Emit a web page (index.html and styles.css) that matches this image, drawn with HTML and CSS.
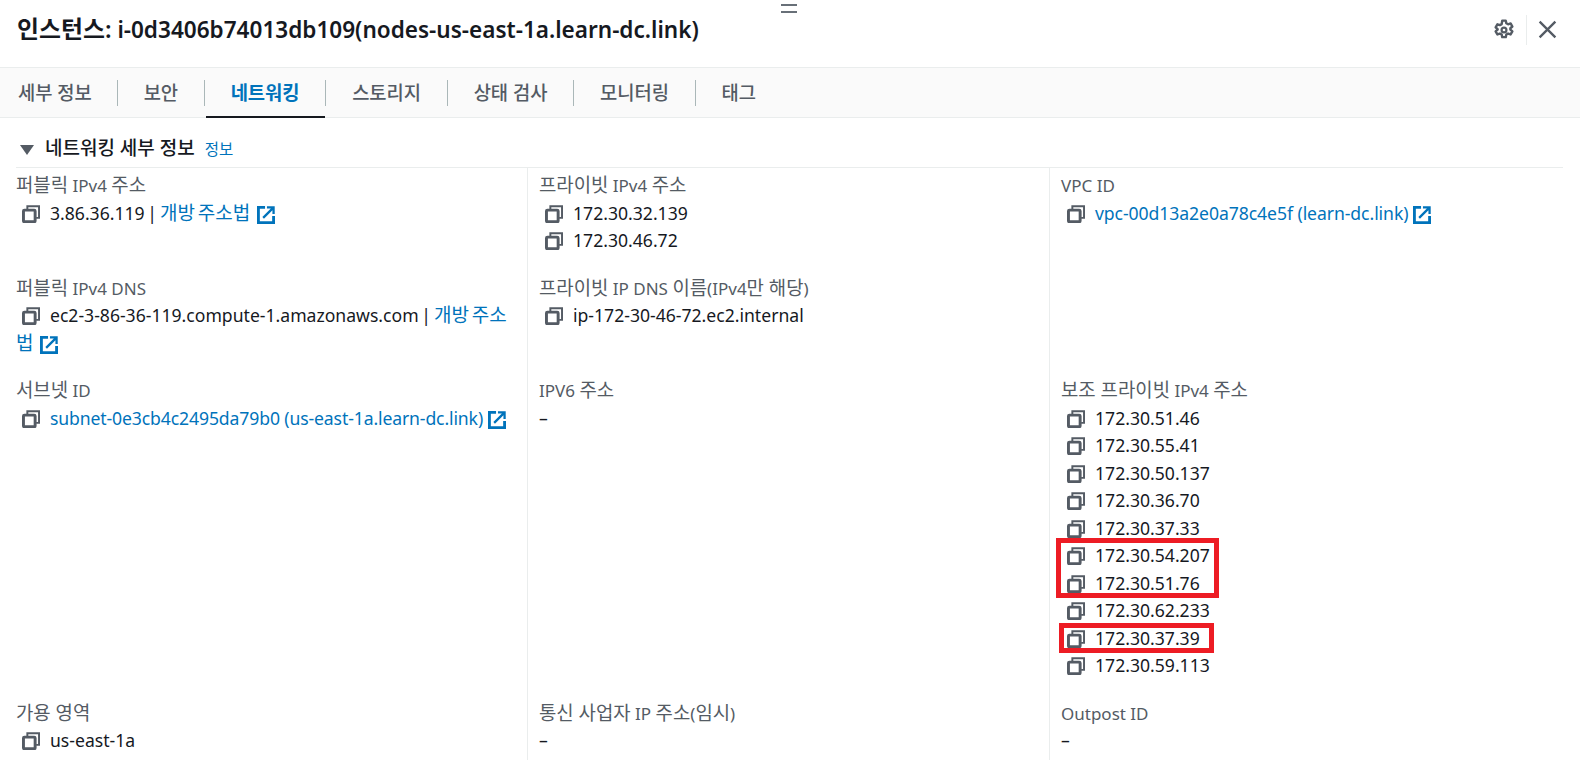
FILE: index.html
```html
<!DOCTYPE html>
<html lang="ko">

<head>
    <meta charset="UTF-8">
    <title>인스턴스 네트워킹</title>
    <link rel="stylesheet" href="styles.css">
</head>

<body>
    <svg class="defs" width="0" height="0">
        <symbol id="copy" viewBox="0.5 0.75 18.5 18.5">
            <path d="M6 5V2h12v12h-3" fill="none" stroke="currentColor" stroke-width="2" />
            <rect x="2" y="6" width="12" height="12" rx="1" fill="none" stroke="currentColor" stroke-width="3" />
        </symbol>
        <symbol id="ext" viewBox="0.5 0.5 19 19">
            <path d="M9 2H2v16h16v-7" fill="none" stroke="currentColor" stroke-width="3" />
            <path d="M7 13L17 3M11 2h7v7" fill="none" stroke="currentColor" stroke-width="2.4" />
        </symbol>
    </svg>

    <div class="panel">
        <div class="handle"></div>
        <header class="head">
            <h1><span class="ko">인스턴스:</span> i-0d3406b74013db109(nodes-us-east-1a.learn-dc.link)</h1>
            <div class="tools">
                <svg class="gear" viewBox="0 0 20 20" width="22" height="22">
                    <path d="M8.4 1.5h3.2l.5 2.4 1.6.9 2.3-.8 1.6 2.8-1.8 1.6v1.2l1.8 1.6-1.6 2.8-2.3-.8-1.6.9-.5 2.4H8.4l-.5-2.4-1.6-.9-2.3.8-1.6-2.8 1.8-1.6V9.2L2.4 7.6 4 4.8l2.3.8 1.6-.9z" fill="none" stroke="currentColor" stroke-width="2.2" stroke-linejoin="round" />
                    <circle cx="10" cy="10" r="2.2" fill="none" stroke="currentColor" stroke-width="2" />
                </svg>
                <span class="sep"></span>
                <svg class="close" viewBox="0 0 20 20" width="21" height="21">
                    <path d="M2.5 2.5l15 15M17.5 2.5l-15 15" fill="none" stroke="currentColor" stroke-width="2.2" />
                </svg>
            </div>
        </header>

        <nav class="tabs">
            <a class="tab">세부 정보</a>
            <a class="tab">보안</a>
            <a class="tab active">네트워킹</a>
            <a class="tab">스토리지</a>
            <a class="tab">상태 검사</a>
            <a class="tab">모니터링</a>
            <a class="tab">태그</a>
        </nav>

        <section class="detail">
            <h2><span class="caret"></span>네트워킹 세부 정보 <a class="info">정보</a></h2>
            <div class="grid">
                <div class="cell">
                    <div class="label"><span class="ko">퍼블릭</span> IPv4 <span class="ko">주소</span></div>
                    <div class="val"><svg class="ico"><use href="#copy" /></svg>3.86.36.119 |<a class="link"><span class="ko">개방 주소법</span> <svg class="ext"><use href="#ext" /></svg></a></div>
                </div>
                <div class="cell">
                    <div class="label"><span class="ko">프라이빗</span> IPv4 <span class="ko">주소</span></div>
                    <div class="val"><svg class="ico"><use href="#copy" /></svg>172.30.32.139</div>
                    <div class="val"><svg class="ico"><use href="#copy" /></svg>172.30.46.72</div>
                </div>
                <div class="cell">
                    <div class="label">VPC ID</div>
                    <div class="val"><svg class="ico"><use href="#copy" /></svg><a class="tight short">vpc-00d13a2e0a78c4e5f (learn-dc.link) <svg class="ext"><use href="#ext" /></svg></a></div>
                </div>

                <div class="cell">
                    <div class="label"><span class="ko">퍼블릭</span> IPv4 DNS</div>
                    <div class="val wrap"><svg class="ico"><use href="#copy" /></svg>ec2-3-86-36-119.compute-1.amazonaws.com |<a class="link"><span class="ko">개방 주소법</span> <svg class="ext"><use href="#ext" /></svg></a></div>
                </div>
                <div class="cell">
                    <div class="label"><span class="ko">프라이빗</span> IP DNS <span class="ko">이름</span>(IPv4<span class="ko">만 해당</span>)</div>
                    <div class="val"><svg class="ico"><use href="#copy" /></svg>ip-172-30-46-72.ec2.internal</div>
                </div>
                <div class="cell"></div>

                <div class="cell">
                    <div class="label"><span class="ko">서브넷</span> ID</div>
                    <div class="val"><svg class="ico"><use href="#copy" /></svg><a class="tight">subnet-0e3cb4c2495da79b0 (us-east-1a.learn-dc.link) <svg class="ext"><use href="#ext" /></svg></a></div>
                </div>
                <div class="cell">
                    <div class="label">IPV6 <span class="ko">주소</span></div>
                    <div class="val none">–</div>
                </div>
                <div class="cell">
                    <div class="label"><span class="ko">보조 프라이빗</span> IPv4 <span class="ko">주소</span></div>
                    <div class="val"><svg class="ico"><use href="#copy" /></svg>172.30.51.46</div>
                    <div class="val"><svg class="ico"><use href="#copy" /></svg>172.30.55.41</div>
                    <div class="val"><svg class="ico"><use href="#copy" /></svg>172.30.50.137</div>
                    <div class="val"><svg class="ico"><use href="#copy" /></svg>172.30.36.70</div>
                    <div class="val"><svg class="ico"><use href="#copy" /></svg>172.30.37.33</div>
                    <div class="val"><svg class="ico"><use href="#copy" /></svg>172.30.54.207</div>
                    <div class="val"><svg class="ico"><use href="#copy" /></svg>172.30.51.76</div>
                    <div class="val"><svg class="ico"><use href="#copy" /></svg>172.30.62.233</div>
                    <div class="val"><svg class="ico"><use href="#copy" /></svg>172.30.37.39</div>
                    <div class="val"><svg class="ico"><use href="#copy" /></svg>172.30.59.113</div>
                </div>

                <div class="cell">
                    <div class="label"><span class="ko">가용 영역</span></div>
                    <div class="val"><svg class="ico"><use href="#copy" /></svg>us-east-1a</div>
                </div>
                <div class="cell">
                    <div class="label"><span class="ko">통신 사업자</span> IP <span class="ko">주소</span>(<span class="ko">임시</span>)</div>
                    <div class="val none">–</div>
                </div>
                <div class="cell">
                    <div class="label">Outpost ID</div>
                    <div class="val none">–</div>
                </div>
            </div>
        </section>

        <!-- 빨간 표시 -->
        <div class="mark mark-a"></div>
        <div class="mark mark-b"></div>
    </div>
</body>

</html>
```

FILE: styles.css
```css
* {
    margin: 0;
    padding: 0;
    box-sizing: border-box;
}

html,
body {
    height: 760px;
    overflow: hidden;
}

body {
    background-color: #fff;
    color: #16191f;
    font-family: "Noto Sans", "Noto Sans CJK KR", sans-serif;
    font-size: 17.6px;
    line-height: 27.5px;
}

.defs {
    position: absolute;
}

/* 한글은 라틴 글자보다 조금 크게 */
.ko {
    font-size: 1.08em;
    line-height: 1;
}

.panel {
    position: relative;
    height: 760px;
}

.handle {
    position: absolute;
    left: 781px;
    top: 4px;
    width: 16px;
    height: 9px;
    border-top: 2px solid #687078;
    border-bottom: 2px solid #687078;
}

.head {
    height: 67px;
    display: flex;
    align-items: center;
    justify-content: space-between;
    padding: 0 22px 8px 17px;
}

.head h1 {
    font-size: 22.55px;
    font-weight: 600;
}

.head h1 .ko {
    font-size: 1.06em;
}

.tools {
    display: flex;
    align-items: center;
    color: #545b64;
}

.sep {
    width: 1px;
    height: 30px;
    background-color: #eaeded;
    margin: 0 10px 0 11px;
}

.tabs {
    height: 51px;
    display: flex;
    align-items: center;
    background-color: #fafafa;
    border-top: 1px solid #eaeded;
    border-bottom: 1px solid #eaeded;
    padding-left: 18px;
}

.tab {
    position: relative;
    height: 26px;
    line-height: 26px;
    padding: 0 25.75px;
    border-left: 1px solid #aab7b8;
    font-size: 18.75px;
    font-weight: 500;
    color: #545b64;
    white-space: nowrap;
}

.tab:first-child {
    padding: 0 25px 0 0;
    border-left: 0;
}

.tab.active {
    color: #0073bb;
    font-weight: 700;
}

.tab.active::after {
    content: "";
    position: absolute;
    left: 1px;
    right: 0;
    bottom: -12px;
    height: 2px;
    background-color: #16191f;
}

.detail {
    padding: 16px 17px 0 16px;
}

.detail h2 {
    height: 34px;
    font-size: 19px;
    font-weight: 500;
    line-height: 28px;
    padding-left: 4px;
    color: #16191f;
    border-bottom: 1px solid #eaeded;
}

.caret {
    display: inline-block;
    width: 0;
    height: 0;
    border-left: 7px solid transparent;
    border-right: 7px solid transparent;
    border-top: 10px solid #545b64;
    margin-right: 11px;
}

.info {
    font-size: 15.5px;
    font-weight: 400;
    color: #0073bb;
    margin-left: 5px;
}

.grid {
    display: grid;
    grid-template-columns: 511px 522px 514px;
    row-gap: 20px;
    margin-top: 4px;
}

.cell {
    padding-left: 11px;
    border-left: 1px solid #eaeded;
    margin-top: -5px;
    padding-top: 5px;
    margin-bottom: -20px;
    padding-bottom: 20px;
}

.cell:nth-child(3n+1) {
    border-left: 0;
    padding-left: 0;
    padding-right: 4px;
}

.label {
    color: #545b64;
    font-size: 17px;
}

.label .ko {
    font-size: 1.11em;
}

.val {
    padding-left: 6px;
    white-space: nowrap;
    word-spacing: -2px;
}

.val.none {
    padding-left: 0;
}

.val.wrap {
    white-space: normal;
    padding-left: 0;
    text-indent: 6px;
}

.val a {
    color: #0073bb;
    text-indent: 0;
}

.val a.link {
    margin-left: 3px;
}

.val a.tight {
    word-spacing: 0;
    letter-spacing: -.12px;
}

.val a.short {
    letter-spacing: -.07px;
}

.ico {
    width: 18px;
    height: 18px;
    margin-right: 10px;
    vertical-align: -3px;
    color: #545b64;
}

.ext {
    width: 18px;
    height: 18px;
    vertical-align: -4px;
}

.link .ext {
    margin-left: 4px;
}

.mark {
    position: absolute;
    border: 5px solid #ed1c24;
}

.mark-a {
    left: 1056px;
    top: 538px;
    width: 163px;
    height: 60px;
}

.mark-b {
    left: 1059px;
    top: 623px;
    width: 155px;
    height: 30px;
}
```
